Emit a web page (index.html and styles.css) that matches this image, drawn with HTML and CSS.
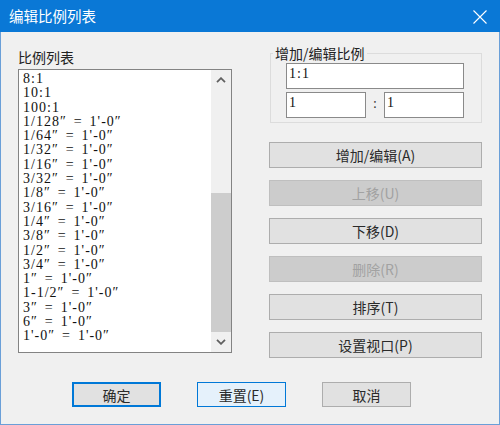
FILE: index.html
```html
<!DOCTYPE html>
<html lang="zh-CN">
<head>
<meta charset="utf-8">
<title>编辑比例列表</title>
<link rel="stylesheet" href="styles.css">
</head>
<body>
<div class="window">
  <div class="titlebar">
    <span class="title">编辑比例列表</span>
    <svg class="close" width="14" height="14" viewBox="0 0 14 14" aria-label="关闭">
      <path d="M0.5 0.5 L13.5 13.5 M13.5 0.5 L0.5 13.5" stroke="#ffffff" stroke-width="1.1" fill="none"/>
    </svg>
  </div>
  <div class="client">
    <div class="main">
      <div class="left">
        <div class="label">比例列表</div>
        <div class="listbox">
          <div class="items">
            <div class="item">8:1</div>
            <div class="item">10:1</div>
            <div class="item">100:1</div>
            <div class="item">1/128″ = 1'-0″</div>
            <div class="item">1/64″ = 1'-0″</div>
            <div class="item">1/32″ = 1'-0″</div>
            <div class="item">1/16″ = 1'-0″</div>
            <div class="item">3/32″ = 1'-0″</div>
            <div class="item">1/8″ = 1'-0″</div>
            <div class="item">3/16″ = 1'-0″</div>
            <div class="item">1/4″ = 1'-0″</div>
            <div class="item">3/8″ = 1'-0″</div>
            <div class="item">1/2″ = 1'-0″</div>
            <div class="item">3/4″ = 1'-0″</div>
            <div class="item">1″ = 1'-0″</div>
            <div class="item">1-1/2″ = 1'-0″</div>
            <div class="item">3″ = 1'-0″</div>
            <div class="item">6″ = 1'-0″</div>
            <div class="item">1'-0″ = 1'-0″</div>
          </div>
          <div class="vscroll">
            <div class="arrow">
              <svg width="10" height="6" viewBox="0 0 10 6"><polyline points="1,5.2 5,1.2 9,5.2" fill="none" stroke="#606060" stroke-width="1.8"/></svg>
            </div>
            <div class="track"><div class="thumb"></div></div>
            <div class="arrow">
              <svg width="10" height="6" viewBox="0 0 10 6"><polyline points="1,0.8 5,4.8 9,0.8" fill="none" stroke="#606060" stroke-width="1.8"/></svg>
            </div>
          </div>
        </div>
      </div>
      <div class="right">
        <fieldset class="group">
          <legend class="legend">增加/编辑比例</legend>
          <div class="group-body">
            <div class="edit">1:1</div>
            <div class="ratio">
              <div class="edit small">1</div>
              <span class="colon">:</span>
              <div class="edit small">1</div>
            </div>
          </div>
        </fieldset>
        <div class="actions">
          <button class="btn">增加/编辑(A)</button>
          <button class="btn" disabled>上移(U)</button>
          <button class="btn">下移(D)</button>
          <button class="btn" disabled>删除(R)</button>
          <button class="btn">排序(T)</button>
          <button class="btn">设置视口(P)</button>
        </div>
      </div>
    </div>
    <div class="footer">
      <button class="btn dlg default">确定</button>
      <button class="btn dlg hot">重置(E)</button>
      <button class="btn dlg">取消</button>
    </div>
  </div>
</div>
</body>
</html>
```

FILE: styles.css
```css
* {
  box-sizing: border-box;
}

html, body {
  margin: 0;
  padding: 0;
  background: #f0f0f0;
}

.window {
  width: 500px;
  height: 425px;
  display: flex;
  flex-direction: column;
  font-family: "Noto Sans CJK SC", "Noto Sans", sans-serif;
  font-size: 14px;
  color: #222222;
}

.titlebar {
  height: 32px;
  flex: none;
  background: #0a78d6;
  display: flex;
  align-items: center;
  justify-content: space-between;
  padding: 0 13px 0 9px;
}

.title {
  color: #ffffff;
  font-size: 14.5px;
  line-height: 32px;
}

.close {
  display: block;
  margin-top: 1px;
}

.client {
  flex: 1;
  background: #f0f0f0;
  border: 1px solid #6a9fd8;
  border-top: none;
  display: flex;
  flex-direction: column;
}

.main {
  display: flex;
  align-items: flex-start;
  padding: 13px 0 0 17px;
}

.left {
  width: 214px;
  padding-top: 4px;
}

.label {
  line-height: 17px;
  height: 17px;
  color: #222222;
}

.listbox {
  margin-top: 3px;
  height: 284px;
  border: 1px solid #838383;
  background: #ffffff;
  display: flex;
}

.items {
  flex: 1;
  padding: 2px 0 0 4px;
  font-family: "Liberation Serif", "Noto Sans CJK SC", serif;
  font-size: 14px;
  line-height: 14.3px;
  letter-spacing: 1px;
  word-spacing: 2.5px;
  color: #111111;
  overflow: hidden;
}

.item {
  white-space: pre;
  height: 14.3px;
}

.vscroll {
  width: 20px;
  flex: none;
  background: #f0f0f0;
  display: flex;
  flex-direction: column;
}

.arrow {
  height: 20px;
  flex: none;
  display: flex;
  align-items: center;
  justify-content: center;
}

.arrow svg {
  display: block;
}

.track {
  flex: 1;
  display: flex;
  flex-direction: column;
  justify-content: flex-end;
}

.thumb {
  height: 139px;
  background: #cdcdcd;
}

.right {
  width: 213px;
  margin-left: 37px;
}

.group {
  margin: 0 0 0 1px;
  width: 212px;
  padding: 0;
  border: 1px solid #dcdcdc;
  min-width: 0;
}

.legend {
  margin-left: 2px;
  padding: 0 2px;
  line-height: 17px;
  color: #222222;
}

.group-body {
  padding: 1px 17px 4px 15px;
}

.edit {
  height: 26px;
  border: 1px solid #8a8a8a;
  background: #ffffff;
  padding: 3px 2px 0 2px;
  font-family: "Liberation Serif", "Noto Sans CJK SC", serif;
  font-size: 14px;
  line-height: 14.2px;
  letter-spacing: 1px;
  color: #111111;
}

.ratio {
  margin-top: 3px;
  display: flex;
}

.edit.small {
  width: 80px;
}

.colon {
  width: 18px;
  text-align: center;
  padding-top: 5px;
  font-family: "Liberation Serif", serif;
  font-size: 14px;
  line-height: 14px;
  color: #333333;
}

.actions {
  margin-top: 19px;
  display: flex;
  flex-direction: column;
  gap: 12px;
}

.btn {
  height: 26px;
  margin: 0;
  padding: 0;
  border: 1px solid #adadad;
  background: #e1e1e1;
  font-family: "Noto Sans CJK SC", "Noto Sans", sans-serif;
  font-size: 14px;
  line-height: 22px;
  color: #2a2a2a;
  text-align: center;
}

.btn:disabled {
  background: #cccccc;
  border-color: #bfbfbf;
  color: #a2a2a2;
}

.footer {
  margin-top: 24px;
  padding-left: 71px;
  display: flex;
  gap: 36px;
}

.btn.dlg {
  width: 89px;
  height: 25px;
}

.btn.default {
  border: 2px solid #0078d7;
}

.btn.hot {
  background: #e5f1fb;
  border: 1px solid #0078d7;
}
```
